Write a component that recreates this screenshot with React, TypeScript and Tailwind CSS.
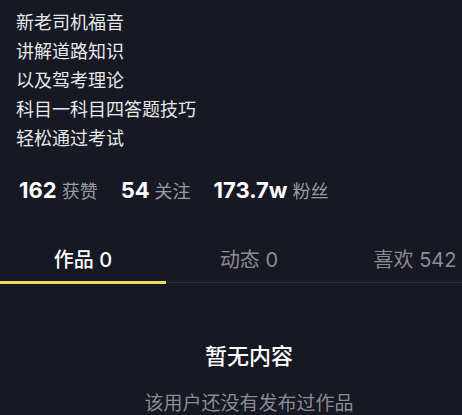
const bio = ["新老司机福音", "讲解道路知识", "以及驾考理论", "科目一科目四答题技巧", "轻松通过考试"];

const stats = [
  { value: "162", label: "获赞" },
  { value: "54", label: "关注" },
  { value: "173.7w", label: "粉丝" },
];

const tabs = [
  { name: "作品", count: "0", active: true },
  { name: "动态", count: "0", active: false },
  { name: "喜欢", count: "542", active: false },
];

export default function App() {
  return (
    <div
      className="w-[462px] h-[415px] overflow-hidden bg-[#161823] text-white"
      style={{ fontFamily: 'Inter, "Noto Sans CJK SC", sans-serif' }}
    >
      <div className="w-[498px]">
        {/* Bio */}
        <div className="pt-[8px] pl-[16px] text-[18px] leading-[29px] text-[#e8e8ea]">
          {bio.map((line) => (
            <p key={line}>{line}</p>
          ))}
        </div>

        {/* Stats */}
        <div className="flex items-center gap-[23px] pl-[19px] mt-[22px] h-[30px]">
          {stats.map((s) => (
            <div key={s.label} className="flex items-baseline gap-[5px]">
              <span className="text-[22px] font-bold">{s.value}</span>
              <span className="text-[18px] text-[#9a9ba2]">{s.label}</span>
            </div>
          ))}
        </div>

        {/* Tabs */}
        <div className="mt-[34px] flex">
          {tabs.map((t) => (
            <div key={t.name} className="w-[166px] flex flex-col">
              <div
                className={`h-[42px] flex items-center justify-center text-[20px] ${
                  t.active ? "text-white font-medium" : "text-[#8b8c93]"
                }`}
              >
                {t.name} {t.count}
              </div>
              {t.active ? (
                <div className="h-[3px] bg-[#f5d85a]" />
              ) : (
                <div className="h-[3px] flex items-center">
                  <div className="h-px w-full bg-[#2c2d38]" />
                </div>
              )}
            </div>
          ))}
        </div>

        {/* Empty state */}
        <div className="flex flex-col items-center mt-[57px]">
          <p className="text-[22px] font-medium leading-[30px]">暂无内容</p>
          <p className="mt-[20px] text-[19px] leading-[26px] text-[#8b8c93]">该用户还没有发布过作品</p>
        </div>
      </div>
    </div>
  );
}
